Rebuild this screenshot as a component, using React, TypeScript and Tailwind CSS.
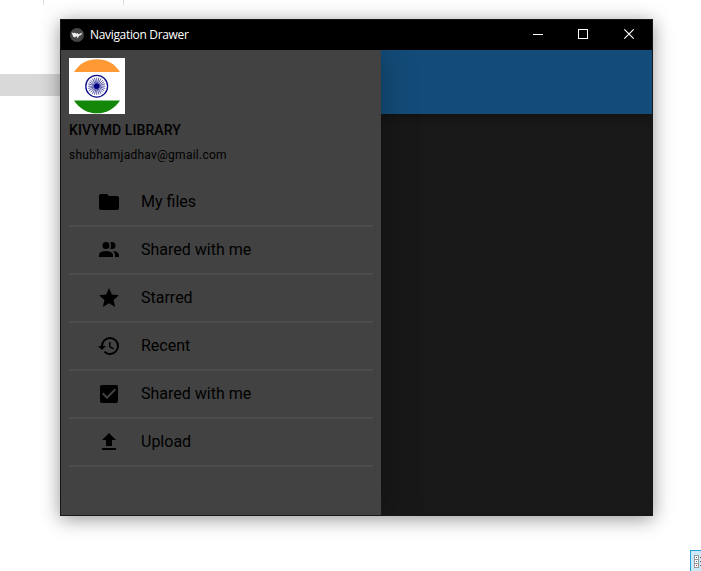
import React from "react";

const ICONS = {
  folder: "M10 4H4c-1.11 0-2 .89-2 2v12a2 2 0 0 0 2 2h16a2 2 0 0 0 2-2V8c0-1.11-.9-2-2-2h-8l-2-2Z",
  people:
    "M16 17v2H2v-2s0-4 7-4 7 4 7 4m-3.5-9.5A3.5 3.5 0 1 0 9 11a3.5 3.5 0 0 0 3.500-3.500m3.440 5.500A5.320 5.320 0 0 1 18 17v2h4v-2s0-3.630-6.060-4M15 4a3.390 3.390 0 0 0-1.930.590 5 5 0 0 1 0 5.820A3.390 3.390 0 0 0 15 11a3.500 3.500 0 0 0 0-7Z",
  star: "M12 17.27 18.18 21l-1.64-7.03L22 9.240l-7.190-.620L12 2 9.190 8.620 2 9.240l5.450 4.730L5.820 21 12 17.270Z",
  history:
    "M13.500 8H12v5l4.280 2.540.720-1.210-3.500-2.080V8M13 3a9 9 0 0 0-9 9H1l3.960 4.030L9 12H6a7 7 0 1 1 7 7c-1.930 0-3.680-.790-4.940-2.060l-1.420 1.420A8.896 8.896 0 0 0 13 21a9 9 0 0 0 0-18",
  checkbox:
    "m10 17-5-5 1.410-1.420L10 14.170l7.590-7.590L19 8m0-5H5c-1.110 0-2 .890-2 2v14a2 2 0 0 0 2 2h14a2 2 0 0 0 2-2V5a2 2 0 0 0-2-2Z",
  upload: "M9 16v-6H5l7-7 7 7h-4v6H9m-4 4v-2h14v2H5Z",
};

const ITEMS: { label: string; icon: keyof typeof ICONS }[] = [
  { label: "My files", icon: "folder" },
  { label: "Shared with me", icon: "people" },
  { label: "Starred", icon: "star" },
  { label: "Recent", icon: "history" },
  { label: "Shared with me", icon: "checkbox" },
  { label: "Upload", icon: "upload" },
];

function Flag() {
  const spokes = Array.from({ length: 24 }, (_, i) => i * 15);
  return (
    <svg className="block h-14 w-14 bg-white" viewBox="0 0 56 56">
      <path d="M5 14A27 27 0 0 1 51 14Z" fill="#ff9933" />
      <path d="M5 42.500A27 27 0 0 0 51 42.500Z" fill="#138808" />
      <circle cx="27.700" cy="28.200" r="10.900" fill="#fff" stroke="#10108a" strokeWidth="1.300" />
      {spokes.map((a) => (
        <path key={a} d="M27.700 28.200V19.500" stroke="#000080" strokeWidth=".6" transform={`rotate(${a} 27.7 28.2)`} />
      ))}
      <circle cx="27.700" cy="28.200" r="2.600" fill="#000080" />
    </svg>
  );
}

function TitleBar() {
  return (
    <header className="flex h-[30px] shrink-0 items-center bg-black text-white">
      <svg className="-mt-px ml-[9px] h-[14px] w-[14px]" viewBox="0 0 14 14">
        <circle cx="7" cy="7" r="7" fill="#444546" />
        <path d="M1.600 4.300 3.800 5.200 5 4.500l1.200 1.300 1.300-.9 1 1.300 4-1.700L10.800 7.300 9.400 7.500 7.600 10.300 6.300 8 5 9.600 3.200 8.800Z" fill="#eee" />
      </svg>
      <span className="ml-1.5 grow whitespace-nowrap font-['Open_Sans','Noto_Sans',sans-serif] text-[12px] leading-[30px] tracking-[-0.33px]">
        Navigation Drawer
      </span>
      <div className="-mr-px flex h-full">
        <svg className="h-[30px] w-[46px]" viewBox="0 0 46 30" shapeRendering="crispEdges">
          <path d="M18 14h10v1H18z" fill="#fff" />
        </svg>
        <svg className="h-[30px] w-[46px]" viewBox="0 0 46 30" shapeRendering="crispEdges">
          <path d="M17.500 9.500h9v9h-9z" fill="none" stroke="#fff" />
        </svg>
        <svg className="h-[30px] w-[46px]" viewBox="0 0 46 30">
          <path d="m17.300 9.300 9.400 9.400m0-9.400-9.400 9.400" stroke="#fff" strokeWidth="1.200" />
        </svg>
      </div>
    </header>
  );
}

function Drawer() {
  return (
    <aside className="relative flex w-80 shrink-0 flex-col bg-[#424242] px-2 pt-2 font-[Roboto,sans-serif] text-black shadow-[0_0_34px_rgba(0,0,0,0.3)]">
      <Flag />
      <h1 className="mt-1.5 text-[14px] font-medium leading-5 tracking-[0.08px]">KIVYMD LIBRARY</h1>
      <p className="mt-1.5 text-[12px] leading-[18px] tracking-[0.25px]">shubhamjadhav@gmail.com</p>
      <nav className="mt-[15px]">
        {ITEMS.map((item, i) => (
          <div key={i} className="flex h-12 items-center gap-5 border-b-2 border-[#4d4d4d] pl-7">
            <svg className="h-6 w-6 fill-black" viewBox="0 0 24 24">
              <path d={ICONS[item.icon]} />
            </svg>
            <span className="text-[16px] leading-6">{item.label}</span>
          </div>
        ))}
      </nav>
    </aside>
  );
}

export default function App() {
  return (
    <div className="relative h-[571px] w-[701px] overflow-hidden bg-white pl-[60px] pt-[19px]">
      <div className="absolute left-[43px] top-0 h-[5px] w-px bg-[#dedede]" />
      <div className="absolute left-[123px] top-0 h-[5px] w-px bg-[#dedede]" />
      <div className="absolute left-0 top-[74px] h-[22px] w-20 bg-[#d9d9d9]" />
      <div className="relative flex h-[497px] w-[593px] flex-col border border-[#171717] bg-[#181818] shadow-[0_3px_18px_rgba(0,0,0,0.42)]">
        <TitleBar />
        <div className="flex min-h-0 grow overflow-hidden">
          <Drawer />
          <main className="flex grow flex-col">
            <div className="h-16 bg-[#134c79] shadow-[0_2px_8px_rgba(0,0,0,0.35)]" />
          </main>
        </div>
      </div>
      <div className="absolute left-[690px] top-[550px] h-[30px] w-[30px] border border-[#26a0da] bg-[#cbe8f6]">
        <svg className="block h-5 w-2.5" viewBox="0 0 10 20" shapeRendering="crispEdges">
          <path d="M3.500 4.500h4v4h-4zm0 4h4v4h-4zm0 4h4v4h-4z" fill="#fff" stroke="#999" />
          <path d="M5 6h1v1H5z" fill="#3b7a57" />
          <path d="M5 10h1v1H5z" fill="#3478c8" />
          <path d="M5 14h1v1H5z" fill="#d02020" />
          <path d="M9 6h1v1H9zm0 4h1v1H9zm0 4h1v1H9z" fill="#666" />
        </svg>
      </div>
    </div>
  );
}
